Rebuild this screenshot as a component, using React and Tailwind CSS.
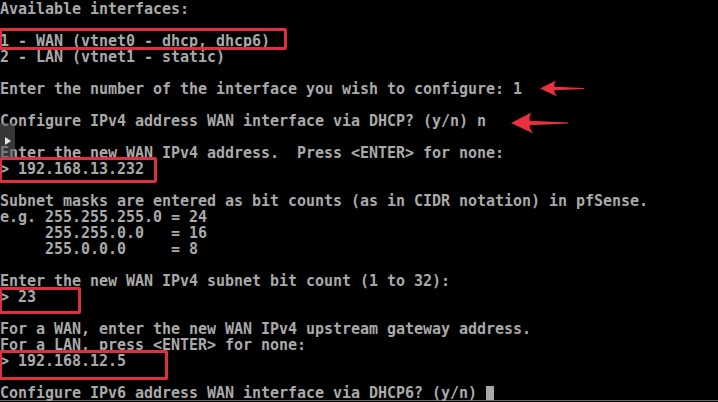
import React from "react";

const lines = [
  "Available interfaces:",
  "",
  "1 - WAN (vtnet0 - dhcp, dhcp6)",
  "2 - LAN (vtnet1 - static)",
  "",
  "Enter the number of the interface you wish to configure: 1",
  "",
  "Configure IPv4 address WAN interface via DHCP? (y/n) n",
  "",
  "Enter the new WAN IPv4 address.  Press <ENTER> for none:",
  "> 192.168.13.232",
  "",
  "Subnet masks are entered as bit counts (as in CIDR notation) in pfSense.",
  "e.g. 255.255.255.0 = 24",
  "     255.255.0.0   = 16",
  "     255.0.0.0     = 8",
  "",
  "Enter the new WAN IPv4 subnet bit count (1 to 32):",
  "> 23",
  "",
  "For a WAN, enter the new WAN IPv4 upstream gateway address.",
  "For a LAN, press <ENTER> for none:",
  "> 192.168.12.5",
  "",
];

function Arrow({ className }) {
  return (
    <svg className={className} viewBox="0 0 100 38" preserveAspectRatio="none">
      <path
        d="M0 19 L36 1 Q31 10 33 15 L100 18 L100 20 L33 23 Q32 29 39 37 Z"
        fill="#e8303f"
      />
    </svg>
  );
}

export default function App() {
  return (
    <div className="relative w-[718px] h-[402px] bg-black overflow-hidden">
      <div className="h-[400px] pt-px font-['DejaVu_Sans_Mono',monospace] font-bold tracking-[-0.03px] text-[15px] leading-[16px] text-[#a9a9a9] whitespace-pre">
        {lines.map((l, i) => (
          <div key={i} className="h-[16px]">{l}</div>
        ))}
        <div className="h-[16px] flex items-start">
          <span>{"Configure IPv6 address WAN interface via DHCP6? (y/n) "}</span>
          <span className="mt-[1px] w-[8px] h-[14px] bg-[#a8a8a8]" />
        </div>
      </div>
      <div className="h-px bg-[#6b6b6b]" />
      <div className="h-px bg-black" />

      {/* annotations */}
      <div className="absolute left-[-1px] top-[28px] w-[288px] h-[22px] border-[3px] border-[#dd2f3f] rounded-[2px]" />
      <div className="absolute left-[-1px] top-[157px] w-[158px] h-[26px] border-[3px] border-[#dd2f3f] rounded-[2px]" />
      <div className="absolute left-[-1px] top-[287px] w-[82px] h-[27px] border-[3px] border-[#dd2f3f] rounded-[2px]" />
      <div className="absolute left-[-1px] top-[350px] w-[169px] h-[30px] border-[3px] border-[#dd2f3f] rounded-[2px]" />

      <Arrow className="absolute left-[540px] top-[80px] w-[44px] h-[17px]" />
      <Arrow className="absolute left-[511px] top-[112px] w-[57px] h-[22px]" />

      {/* side handle overlay */}
      <div className="absolute left-0 top-[123px] w-[15px] h-[35px] rounded-r-[3px] bg-[#5a5a5a]/60 flex items-center justify-center">
        <svg width="6" height="8" viewBox="0 0 6 8">
          <path d="M0 0 L6 4 L0 8 Z" fill="#e6e6e6" />
        </svg>
      </div>
    </div>
  );
}
